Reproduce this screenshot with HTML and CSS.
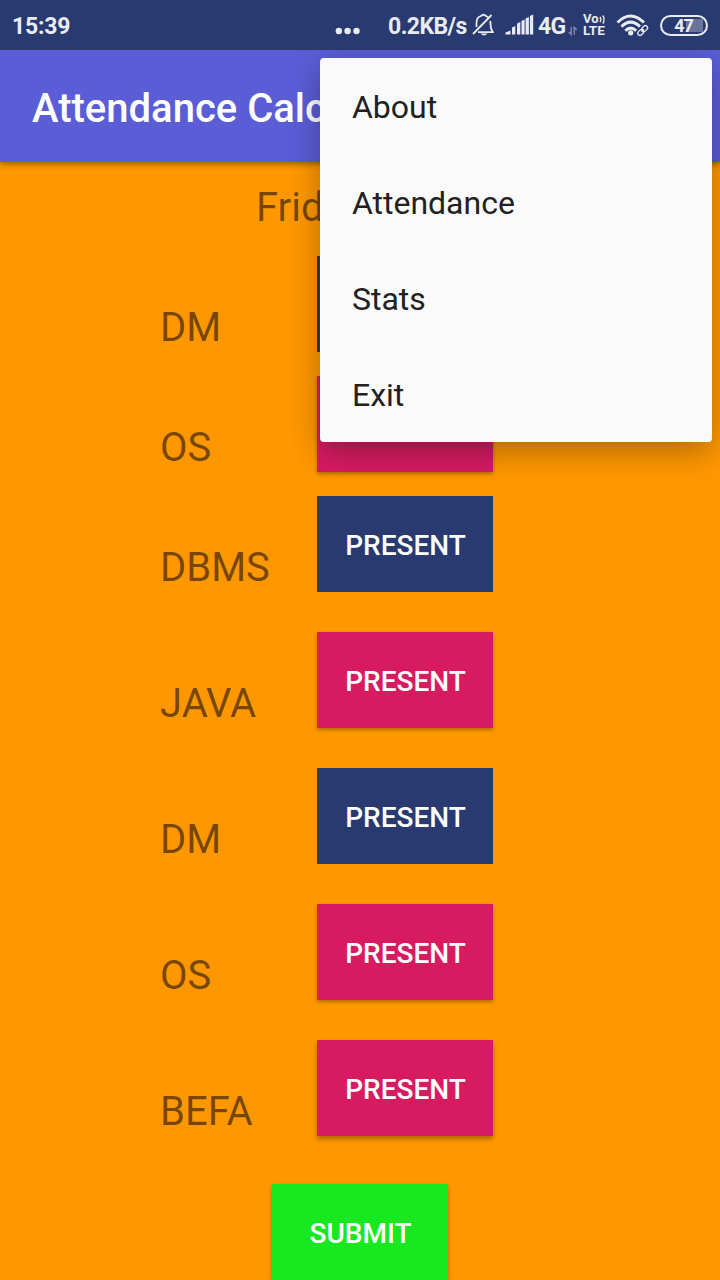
FILE: index.html
```html
<!DOCTYPE html>
<html lang="en">
<head>
<meta charset="utf-8">
<title>Attendance Calculator</title>
<link rel="stylesheet" href="styles.css">
</head>
<body>
<div class="screen">
  <header class="status">
    <span class="time">15:39</span>
    <svg class="dots" width="26" height="8" viewBox="0 0 26 8" fill="#e9ebf1"><circle cx="3.8" cy="4" r="3.2"/><circle cx="12.6" cy="4" r="3.2"/><circle cx="21.5" cy="4" r="3.2"/></svg>
    <span class="speed">0.2KB/s</span>
    <svg class="bell" width="24" height="24" viewBox="0 0 24 24" fill="none" stroke="#e9ebf1" stroke-width="1.8"><path d="M4.500 14V10C4.500 5.500 7 3.500 9 3C10.500 1.500 12.500 1.500 14 3L16 4M18.200 8C18.800 11 18.300 14 19.300 16L20.800 19.200H6M1 21L19.500 2"/><path d="M8.500 20.500Q12 24.500 15.500 20.500Z" fill="#e9ebf1" stroke="none"/></svg>
    <svg class="signal" width="29" height="22" viewBox="0 0 29 22" fill="#e9ebf1"><path d="M.5 20.500V18.500L5.500 16.500V20.500ZM7 20.500V13.500L10.300 12V20.500ZM12 20.500V9.500L15.300 8V20.500ZM16.500 20.500V7L19.600 5.500V20.500ZM20.600 20.500V4.500L23.900 3V20.500ZM24.900 20.500V2L28.200 .5V20.500Z"/></svg>
    <span class="network">4G</span>
    <svg class="arrows" width="10" height="10" viewBox="0 0 10 10" fill="none" stroke="#8791af" stroke-width="1.300"><path d="M3.200 1V8.500L.8 6M6.200 9V1.300L8.600 3.800"/></svg>
    <svg class="volte" width="25" height="24" viewBox="0 0 25 24" fill="#e9ebf1"><text x="1" y="10.300" font-size="12" textLength="15.500" lengthAdjust="spacingAndGlyphs">Vo</text><text x="1" y="22.300" font-size="13.500" textLength="22" lengthAdjust="spacingAndGlyphs">LTE</text><path d="M18 4Q19.700 6.500 18 9M20.800 2.500Q23.400 6.500 20.800 10.500" fill="none" stroke="#e9ebf1" stroke-width="1.400"/></svg>
    <svg class="wifi" width="34" height="24" viewBox="0 0 34 24"><g fill="none" stroke="#e9ebf1" stroke-width="2.900"><path d="M1.500 8.500Q14.500-4.500 28 8.500"/><path d="M5.500 12.600Q14.500 3.700 24 12.600"/><path d="M9.300 16.700Q14.500 11.500 20.200 16.700"/></g><circle cx="14.700" cy="18.800" r="2.600" fill="#e9ebf1"/><g transform="rotate(-45 26.700 16.500)" fill="none"><path d="M21 16.500H32.500" stroke="#283a6f" stroke-width="6"/><rect x="20.700" y="14.300" width="6.500" height="4.400" rx="2.200" stroke="#e9ebf1" stroke-width="1.300"/><rect x="26.200" y="14.300" width="6.500" height="4.400" rx="2.200" stroke="#e9ebf1" stroke-width="1.300"/><path d="M25 16.500H28.500" stroke="#e9ebf1" stroke-width="1.200"/></g></svg>
    <span class="battery">47</span>
  </header>
  <div class="appbar"><h1 class="title">Attendance Calculator</h1></div>
  <main class="content">
    <div class="day">Friday</div>
    <div class="row close"><span class="subject">DM</span><button class="btn navy">PRESENT</button></div>
    <div class="row close"><span class="subject">OS</span><button class="btn pink">PRESENT</button></div>
    <div class="row"><span class="subject">DBMS</span><button class="btn navy">PRESENT</button></div>
    <div class="row"><span class="subject">JAVA</span><button class="btn pink">PRESENT</button></div>
    <div class="row"><span class="subject">DM</span><button class="btn navy">PRESENT</button></div>
    <div class="row"><span class="subject">OS</span><button class="btn pink">PRESENT</button></div>
    <div class="row last"><span class="subject">BEFA</span><button class="btn pink">PRESENT</button></div>
    <button class="btn green">SUBMIT</button>
  </main>
  <nav class="menu">
    <div class="item">About</div>
    <div class="item">Attendance</div>
    <div class="item">Stats</div>
    <div class="item">Exit</div>
  </nav>
</div>
</body>
</html>
```
FILE: styles.css
```css
* { box-sizing: border-box; }
body { margin: 0; font-family: Roboto, "Liberation Sans", sans-serif; }
.screen { position: relative; width: 720px; height: 1280px; overflow: hidden; background: #ff9800; display: flex; flex-direction: column; }

.status { flex: none; position: relative; z-index: 1; height: 50px; padding-left: 12px; display: flex; align-items: center; background: #283a6f; color: #e9ebf1; font-size: 23px; font-weight: 700; line-height: 28px; white-space: nowrap; }
.status svg { flex: none; }
.time { width: 323px; padding-top: 4px; letter-spacing: -.2px; }
.dots { margin-top: 12px; }
.speed { width: 79px; margin-left: 27px; padding-top: 4px; letter-spacing: -.55px; }
.bell { margin-left: 5px; }
.signal { margin-left: 9px; }
.network { width: 29px; margin-left: 4px; padding-top: 4px; letter-spacing: -.6px; }
.arrows { margin: 11px 0 0 1px; }
.volte { margin-left: 4px; font-weight: 700; }
.wifi { margin: 2px 0 0 9px; }
.battery { width: 48px; height: 21px; margin-left: 10px; padding-right: 1px; border: 2px solid #e9ebf1; border-radius: 11px; font-size: 18px; line-height: 17px; letter-spacing: -1px; text-align: center; background: linear-gradient(#68759a, #68759a) 24px 2px / 17px 13px no-repeat; }

.appbar { flex: none; position: relative; height: 112px; padding: 0 32px; display: flex; align-items: center; background: #5a5dd6; box-shadow: 0 2px 6px rgba(0, 0, 0, .4); }
.title { margin: 0; padding-top: 6px; font-size: 40px; font-weight: 500; line-height: 48px; color: #fff; white-space: nowrap; }

.content { display: flex; flex-direction: column; padding-top: 21px; }
.day { height: 73px; padding-left: 256px; font-size: 40px; line-height: 50px; color: rgba(0, 0, 0, .54); }
.row { display: flex; align-items: flex-end; height: 96px; margin-bottom: 40px; padding-left: 160px; }
.close { margin-bottom: 24px; }
.last { margin-bottom: 48px; }
.subject { width: 157px; font-size: 40px; line-height: 48px; color: rgba(0, 0, 0, .54); }
.btn { flex: none; width: 176px; height: 96px; padding: 3px 0 0 1px; border: 0; font: 500 28px/34px Roboto, "Liberation Sans", sans-serif; color: #fff; }
.navy { background: #283a6f; }
.pink { background: #d81b60; box-shadow: 0 2px 4px rgba(0, 0, 0, .3); }
.last .pink { box-shadow: 0 3px 5px rgba(0, 0, 0, .33); }
.green { margin-left: 272px; background: #18e81f; box-shadow: 0 3px 5px rgba(0, 0, 0, .3); }

.menu { position: absolute; top: 58px; right: 8px; width: 392px; height: 384px; border-radius: 4px; background: #fafafa; box-shadow: 0 10px 32px rgba(0, 0, 0, .3); }
.item { height: 96px; padding: 1px 32px 0; font-size: 32px; line-height: 96px; letter-spacing: -.02px; color: #212121; }
```
